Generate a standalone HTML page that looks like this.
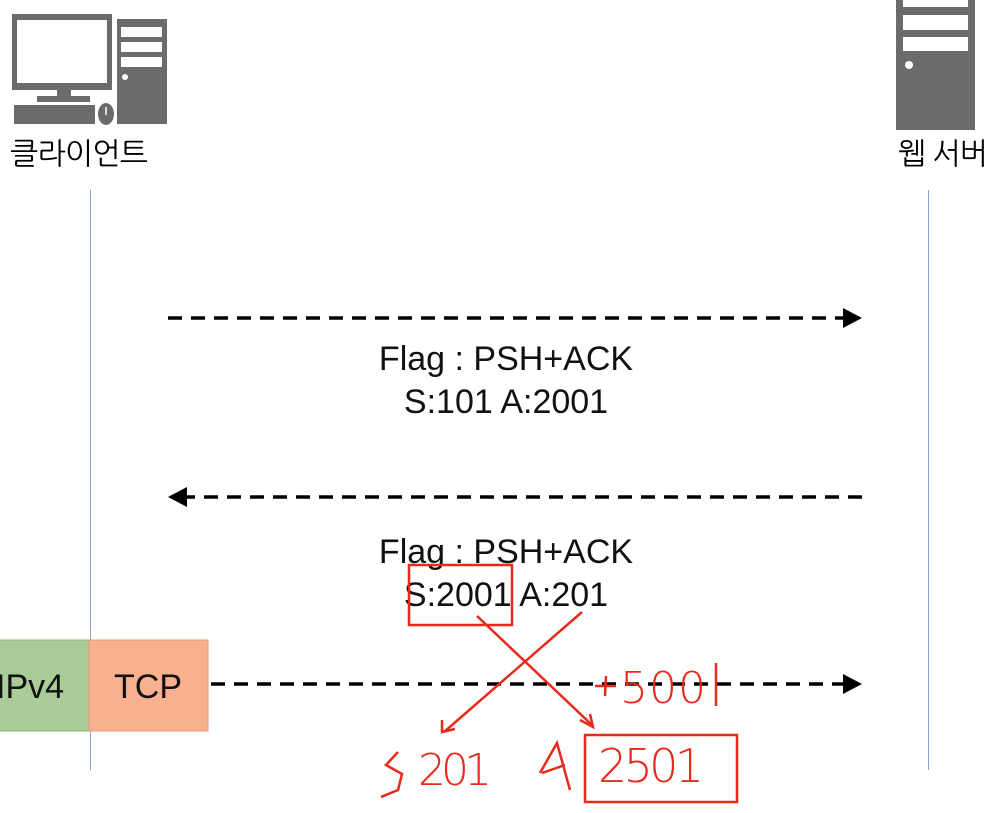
<!DOCTYPE html>
<html><head><meta charset="utf-8"><style>
html,body{margin:0;padding:0;background:#fff;width:990px;height:813px;overflow:hidden}
svg{display:block}
</style></head><body>
<svg width="990" height="813" viewBox="0 0 990 813" xmlns="http://www.w3.org/2000/svg" font-family="Liberation Sans, NanumGothic, sans-serif">
<g fill="#6b6b6e">
<rect x="12" y="14" width="100" height="76"/>
<rect x="57" y="88" width="14" height="10"/>
<rect x="37" y="96" width="53" height="6"/>
<rect x="14" y="105" width="81" height="19"/>
<ellipse cx="106" cy="114" rx="8" ry="11"/>
<rect x="117" y="19" width="50" height="105"/>
</g>
<rect x="17" y="20" width="90" height="63" fill="#fff"/>
<rect x="121" y="27" width="41" height="10" fill="#fff"/>
<rect x="121" y="42" width="41" height="10" fill="#fff"/>
<rect x="121" y="57" width="41" height="10" fill="#fff"/>
<circle cx="125" cy="77" r="3" fill="#fff"/>
<line x1="106" y1="107" x2="106" y2="115" stroke="#fff" stroke-width="1.5"/>
<text x="10" y="164" font-size="30" textLength="138" fill="#000" font-family="NanumGothic, Noto Sans CJK KR, sans-serif">클라이언트</text>
<rect x="896" y="0" width="79" height="130" fill="#6b6b6e"/>
<rect x="903" y="0" width="65" height="7" fill="#fff"/>
<rect x="903" y="15" width="65" height="15" fill="#fff"/>
<rect x="903" y="37" width="65" height="14" fill="#fff"/>
<circle cx="909" cy="65" r="4" fill="#fff"/>
<text x="898" y="164" font-size="30" textLength="90" fill="#000" font-family="NanumGothic, Noto Sans CJK KR, sans-serif">웹 서버</text>
<line x1="90.5" y1="190" x2="90.5" y2="770" stroke="#8aa6c8" stroke-width="1"/>
<line x1="928.5" y1="190" x2="928.5" y2="770" stroke="#8aa6c8" stroke-width="1"/>
<line x1="168" y1="318" x2="845" y2="318" stroke="#000" stroke-width="3.5" stroke-dasharray="14,9"/>
<polygon points="862,318 843,308 843,328" fill="#000"/>
<line x1="862" y1="497" x2="185" y2="497" stroke="#000" stroke-width="3.5" stroke-dasharray="14,9"/>
<polygon points="168,497 187,487 187,507" fill="#000"/>
<line x1="211" y1="684" x2="845" y2="684" stroke="#000" stroke-width="3.5" stroke-dasharray="14,9"/>
<polygon points="862,684 843,674 843,694" fill="#000"/>
<g font-size="34" fill="#111" text-anchor="middle">
<text x="506" y="370">Flag : PSH+ACK</text>
<text x="506" y="413">S:101 A:2001</text>
<text x="506" y="563">Flag : PSH+ACK</text>
<text x="506" y="606">S:2001 A:201</text>
</g>
<rect x="-1" y="640" width="90" height="91" fill="#a9cc98" stroke="#8fb07d"/>
<rect x="89" y="640" width="119" height="91" fill="#f9b08e" stroke="#e59a78"/>
<text x="-4" y="698" font-size="34" fill="#111">IPv4</text>
<text x="148" y="698" font-size="34" fill="#111" text-anchor="middle">TCP</text>
<g stroke="#e8291c" stroke-width="2.5" fill="none">
<rect x="409" y="565" width="103" height="60"/>
<rect x="585" y="735" width="152" height="67"/>
<line x1="477" y1="616" x2="592" y2="725"/>
<line x1="582" y1="612" x2="444" y2="732"/>
<polyline points="442,720 442,732 455,729"/>
<polyline points="580,720 593,727 590,714"/>
<line x1="716" y1="663" x2="716" y2="706"/>
<line x1="595" y1="686" x2="616" y2="686"/>
<line x1="606" y1="676" x2="605" y2="696"/>
<path d="M398 752 L386 765 L402 774 L398 790 L381 797"/>
<path d="M540 773 L557 743 L570 790 M542 773 L565 765"/>
</g>
<g fill="#e8291c" font-family="DejaVu Sans, sans-serif" font-weight="200">
<text x="418" y="785" font-size="44" textLength="74">201</text>
<text x="598" y="782" font-size="46" textLength="106">2501</text>
<text x="620" y="703" font-size="44" textLength="86">500</text>
</g>
</svg>
</body></html>
